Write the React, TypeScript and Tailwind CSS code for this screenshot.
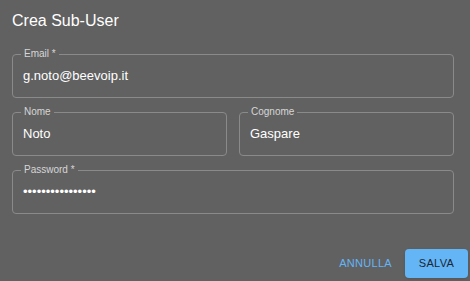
import React from "react";

type FieldProps = {
  label: string;
  value: string;
  required?: boolean;
  className?: string;
};

const Field: React.FC<FieldProps> = ({ label, value, required, className }) => (
  <div className={`relative h-[44px] rounded-[4px] border border-[#8a8a8a] flex items-center pl-[10px] ${className ?? ""}`}>
    {/* label sits on the border, like a notched outline */}
    <span className="absolute -top-[7px] left-[8px] px-[3px] bg-[#616161] text-[10px] leading-[12px] text-[#d6d6d6]">
      {label}
      {required && " *"}
    </span>
    <span className="text-[13px] leading-[16px] text-white">{value}</span>
  </div>
);

const App: React.FC = () => {
  return (
    <div
      className="w-[470px] h-[281px] bg-[#616161] flex flex-col overflow-hidden"
      style={{ fontFamily: '"Liberation Sans", Arial, sans-serif' }}
    >
      {/* TITLE */}
      <div className="px-3 pt-[11px] text-[16px] leading-[20px] text-white">
        Crea Sub-User
      </div>

      {/* FORM */}
      <div className="w-[442px] ml-3 mt-[23px] flex flex-col gap-[14px]">
        <Field label="Email" required value="g.noto@beevoip.it" />
        <div className="grid grid-cols-2 gap-3">
          <Field label="Nome" value="Noto" />
          <Field label="Cognome" value="Gaspare" />
        </div>
        <Field label="Password" required value={"\u2022".repeat(16)} />
      </div>

      {/* ACTIONS */}
      <div className="mt-auto flex justify-end items-center gap-[5px] pr-[2px] pb-[3px]">
        <button className="h-[29px] px-2 text-[11px] tracking-[0.3px] text-[#64b5f6] rounded-[4px]">
          ANNULLA
        </button>
        <button className="h-[29px] w-[63px] text-[11px] tracking-[0.3px] text-[#1b2733] bg-[#64b5f6] rounded-[4px] shadow-sm">
          SALVA
        </button>
      </div>
    </div>
  );
};

export default App;
